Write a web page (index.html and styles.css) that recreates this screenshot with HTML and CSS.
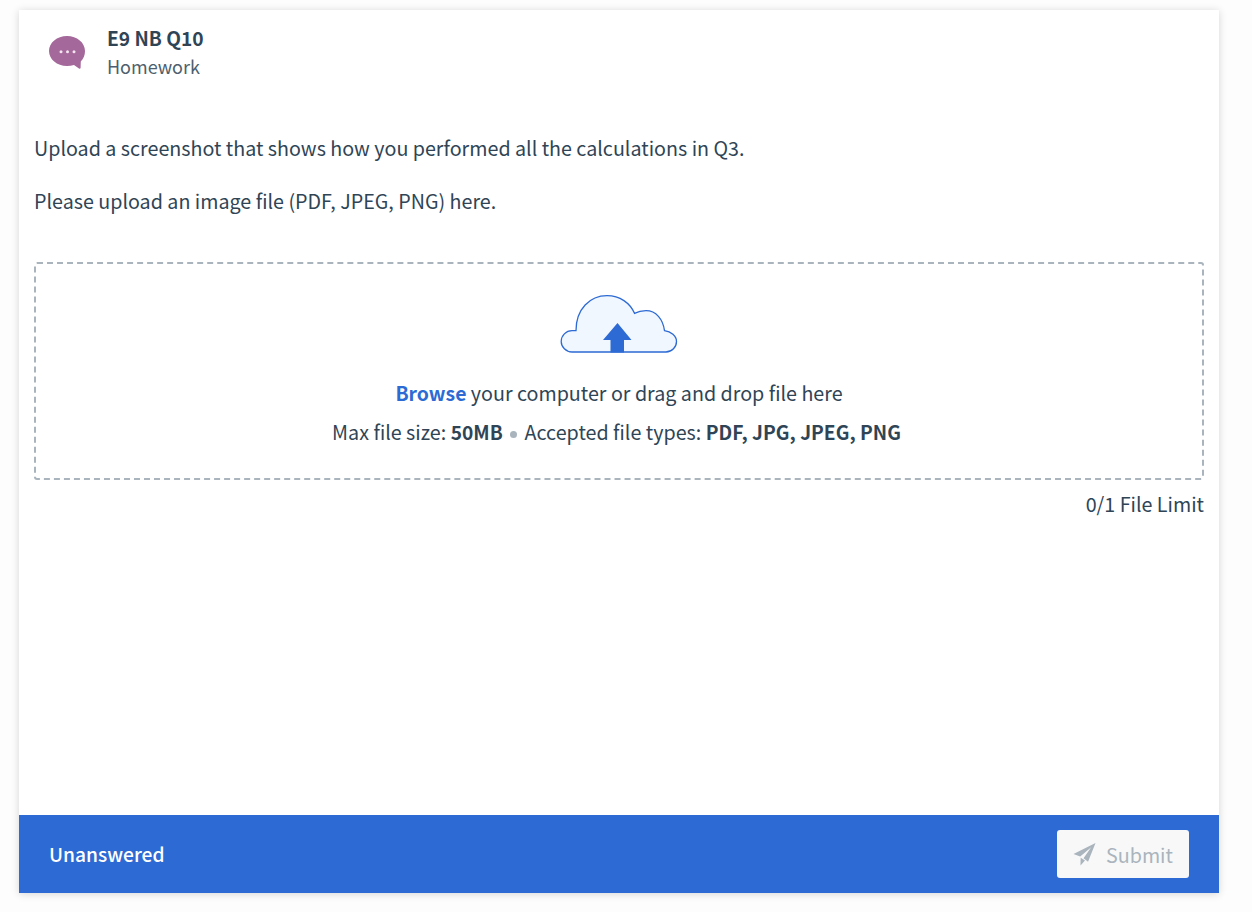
FILE: index.html
```html
<!DOCTYPE html>
<html lang="en">
<head>
<meta charset="utf-8">
<title>E9 NB Q10</title>
<link rel="stylesheet" href="styles.css">
</head>
<body>
<main class="card">
  <div class="content">
    <header class="head">
      <svg class="bubble" viewBox="0 0 38 36" width="38" height="36" aria-hidden="true">
        <path d="M19 2C9 2 1 8.700 1 17C1 25.300 9 32 19 32C21.500 32 23.800 31.600 26 31L31 34.500C31.800 35 32.600 34.500 32.600 33.800L32.800 27.500C35.500 24.800 37 21 37 17C37 8.700 29 2 19 2Z" fill="#a4689a"/>
        <circle cx="13" cy="17.700" r="1.500" fill="#f4e6f1"/>
        <circle cx="19.500" cy="17.700" r="1.500" fill="#f4e6f1"/>
        <circle cx="26" cy="17.700" r="1.500" fill="#f4e6f1"/>
      </svg>
      <div class="titles">
        <div class="title">E9 NB Q10</div>
        <div class="subtitle">Homework</div>
      </div>
    </header>
    <p class="para first">Upload a screenshot that shows how you performed all the calculations in Q3.</p>
    <p class="para">Please upload an image file (PDF, JPEG, PNG) here.</p>
    <section class="drop">
      <svg class="cloud" viewBox="0 0 118 60" width="118" height="60" aria-hidden="true">
        <path d="M12 57C6 57 1.200 52 1.200 46.500C1.200 40.500 6 35.700 12 35.700H16C16 14 30 .7 47 .7C60 .7 70 8 74.500 18.300C78 16.500 82 15.700 86 15.700C96 15.700 103 24 104.500 35.700C111 36.500 116.500 41 116.500 46.500C116.500 52 112 57 106 57Z" fill="#f0f7fe" stroke="#2d6ad3" stroke-width="1.300"/>
        <path d="M57.500 28 71.500 45H64V57.500H50.500V45H43Z" fill="#2d6ad3"/>
      </svg>
      <div class="browse"><span class="link">Browse</span> your computer or drag and drop file here</div>
      <div class="limits">Max file size: <b class="strong">50MB</b> <span class="dot"></span> Accepted file types: <b class="strong">PDF, JPG, JPEG, PNG</b></div>
    </section>
    <div class="count">0/1 File Limit</div>
  </div>
  <footer class="bar">
    <span class="status">Unanswered</span>
    <button class="submit" type="button">
      <svg viewBox="0 0 24 24" width="23" height="24" aria-hidden="true">
        <path d="M23.500 .5 .5 12 7.500 14.500 19 5 11 16.500 15.700 20Z" fill="#a9b4bd"/>
        <path d="M8 16 7.800 24 12.500 18.800Z" fill="#a9b4bd"/>
      </svg>
      <span class="submit-label">Submit</span>
    </button>
  </footer>
</main>
</body>
</html>
```
FILE: styles.css
```css
* { box-sizing: border-box; }
html, body { height: 100%; }
body {
  margin: 0;
  padding: 10px 33px 19px 19px;
  background: #fdfdfd;
  font-family: "Noto Sans CJK SC", "Noto Sans", sans-serif;
  color: #2f4556;
  font-size: 19.7px;
  line-height: 28px;
}
.card {
  width: 1200px;
  height: 883px;
  display: flex;
  flex-direction: column;
  background: #fff;
  box-shadow: 0 1px 8px rgba(0, 0, 0, 0.16);
}
.content { flex: 1; padding: 14px 15px 0 15px; }
.head { display: flex; gap: 21px; padding-left: 14px; }
.bubble { margin-top: 10px; flex: none; }
.title { font-weight: 700; font-size: 19.2px; line-height: 28px; }
.subtitle { color: #4d5f6e; font-size: 18px; line-height: 28px; }
.para { margin: 0 0 25px; line-height: 28px; }
.para.first { margin-top: 54px; }
.drop {
  margin-top: 47px;
  height: 218px;
  border: 2px dashed #a9b4bd;
  border-radius: 3px;
  display: flex;
  flex-direction: column;
  align-items: center;
  padding-top: 31px;
}
.cloud { flex: none; }
.browse { margin-top: 24px; }
.link { color: #2d6ad3; font-weight: 700; font-size: 19.4px; }
.limits { margin-top: 11px; padding-right: 5px; }
.strong { font-size: 19.2px; }
.dot {
  display: inline-block;
  width: 7px;
  height: 7px;
  margin: 0 3px;
  border-radius: 50%;
  background: #a9b4bd;
  vertical-align: 2px;
}
.count { text-align: right; margin-top: 10px; }
.bar {
  height: 78px;
  flex: none;
  background: #2d6ad3;
  display: flex;
  align-items: center;
  justify-content: space-between;
  padding: 0 30px;
}
.status { color: #fff; font-size: 19.2px; font-weight: 500; }
.submit {
  width: 132px;
  height: 48px;
  border: 0;
  border-radius: 3px;
  background: #f8f8f8;
  color: #a9b4bd;
  font: 400 19.7px/28px "Noto Sans CJK SC", "Noto Sans", sans-serif;
  display: flex;
  align-items: center;
  justify-content: center;
  gap: 10px;
  padding: 0;
}
.submit-label { padding-top: 1px; }
```
